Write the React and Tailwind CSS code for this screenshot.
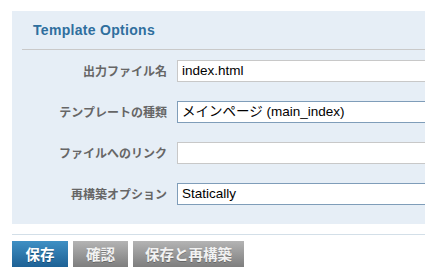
export default function App() {
  const rows = [
    { label: "出力ファイル名", value: "index.html", select: false },
    { label: "テンプレートの種類", value: "メインページ (main_index)", select: true },
    { label: "ファイルへのリンク", value: "", select: false },
    { label: "再構築オプション", value: "Statically", select: true },
  ];

  return (
    <div className="w-[425px] h-[280px] overflow-hidden bg-white pl-[12px] pt-[11px]">
      <div className="w-[440px] bg-[#e6eef6] pb-[19px]">
        <div className="ml-[10px] h-[39px] border-b border-[#c9c9c9] flex items-center pl-[11px]">
          <h2 className="text-[14px] font-bold text-[#2f6f9e] font-['Liberation_Sans',sans-serif] tracking-[0.3px]">
            Template Options
          </h2>
        </div>
        <div className="flex flex-col gap-[19px] pt-[10px]">
          {rows.map((row) => (
            <div key={row.label} className="flex items-center h-[22px]">
              <label className="w-[165px] pr-[10px] text-right text-[12px] font-bold text-[#666] font-['Noto_Sans_CJK_JP',sans-serif] leading-none">
                {row.label}
              </label>
              <div
                className={
                  row.select
                    ? "flex-1 h-[22px] bg-white border border-[#7f9db9] flex items-center pl-[4px] text-[13.5px] text-black font-['Liberation_Sans','Noto_Sans_CJK_JP',sans-serif]"
                    : "flex-1 h-[22px] bg-white border border-[#c8c8c8] flex items-center pl-[4px] text-[13.5px] text-black font-['Liberation_Sans','Noto_Sans_CJK_JP',sans-serif]"
                }
              >
                {row.value}
              </div>
            </div>
          ))}
        </div>
      </div>
      <div className="mt-[10px] w-[440px] border-t border-[#d3dfe8]"></div>
      <div className="mt-[6px] flex gap-[5px] font-['Noto_Sans_CJK_JP',sans-serif]">
        <button className="w-[56px] h-[26px] bg-gradient-to-b from-[#3f90c4] to-[#1d6195] text-white text-[14.5px] font-bold flex items-center justify-center [text-shadow:0_1px_0_rgba(0,0,0,0.3)]">
          保存
        </button>
        <button className="w-[55px] h-[26px] bg-gradient-to-b from-[#b4b4b4] to-[#7e7e7e] text-[#f2f2f2] text-[14.5px] font-bold flex items-center justify-center [text-shadow:0_1px_0_rgba(0,0,0,0.25)]">
          確認
        </button>
        <button className="w-[111px] h-[26px] bg-gradient-to-b from-[#b4b4b4] to-[#7e7e7e] text-[#f2f2f2] text-[14.5px] font-bold flex items-center justify-center [text-shadow:0_1px_0_rgba(0,0,0,0.25)]">
          保存と再構築
        </button>
      </div>
    </div>
  );
}
